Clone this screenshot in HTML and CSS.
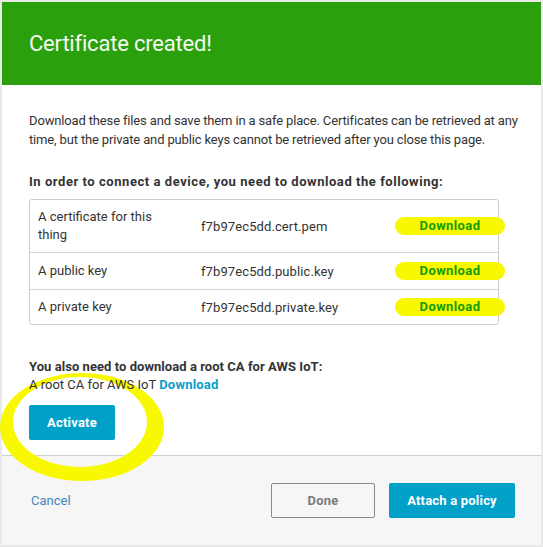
FILE: index.html
```html
<!DOCTYPE html>
<html>
<head>
<meta charset="utf-8">
<link rel="stylesheet" href="styles.css">
</head>
<body>
<div class="modal">
  <div class="header"><h1 class="title">Certificate created!</h1></div>
  <div class="content">
    <p class="intro">Download these files and save them in a safe place. Certificates can be retrieved at any time, but the private and public keys cannot be retrieved after you close this page.</p>
    <p class="label">In order to connect a device, you need to download the following:</p>
    <div class="files">
      <div class="row tall">
        <div class="c1">A certificate for this thing</div>
        <div class="c2">f7b97ec5dd.cert.pem</div>
        <div class="c3"><span class="dl">Download</span></div>
      </div>
      <div class="row">
        <div class="c1">A public key</div>
        <div class="c2">f7b97ec5dd.public.key</div>
        <div class="c3"><span class="dl">Download</span></div>
      </div>
      <div class="row last">
        <div class="c1">A private key</div>
        <div class="c2">f7b97ec5dd.private.key</div>
        <div class="c3"><span class="dl">Download</span></div>
      </div>
    </div>
    <p class="label root">You also need to download a root CA for AWS IoT:</p>
    <p class="rootline">A root CA for AWS IoT <a class="link">Download</a></p>
    <div class="activate-wrap">
      <button class="btn primary activate">Activate</button>
      <svg class="ring" width="166" height="112" viewBox="0 0 166 112">
        <path fill="#f8f800" fill-rule="evenodd" d="M0 57 A82 54 0 1 0 164 57 A82 54 0 1 0 0 57 Z M13 52 A67 45 0 1 0 147 52 A67 45 0 1 0 13 52 Z"/>
      </svg>
    </div>
  </div>
  <div class="footer">
    <a class="cancel">Cancel</a>
    <div class="actions">
      <button class="btn secondary">Done</button>
      <button class="btn primary">Attach a policy</button>
    </div>
  </div>
</div>
</body>
</html>
```
FILE: styles.css
```css
html, body {
  margin: 0;
  padding: 0;
  background: #e9e9e9;
}
body {
  padding: 2px;
  font-family: Roboto, "Noto Sans", sans-serif;
  color: #333;
  font-size: 13px;
}
.modal {
  width: 539px;
  height: 543px;
  background: #fff;
  display: flex;
  flex-direction: column;
}
.header {
  background: #2ba00d;
  height: 83px;
  display: flex;
  align-items: center;
  padding-left: 27px;
}
.title {
  margin: 0;
  font-weight: 400;
  font-size: 22px;
  color: #f4fbf2;
  letter-spacing: -0.2px;
}
.content {
  flex: 1;
  padding: 26px 18px 0 27px;
  position: relative;
}
.intro {
  margin: 0;
  line-height: 19px;
  letter-spacing: -0.15px;
}
.label {
  margin: 23px 0 8px;
  font-weight: 700;
  line-height: 19px;
  letter-spacing: 0.55px;
}
.files {
  border: 1px solid #ccc;
  border-radius: 3px;
  width: 468px;
}
.row {
  display: flex;
  align-items: center;
  height: 36px;
  border-top: 1px solid #d5d5d5;
}
.row:first-child { border-top: none; }
.row.tall { height: 52px; }
.row.last { height: 34px; }
.c1 {
  flex-shrink: 0;
  width: 122px;
  padding: 0 41px 0 8px;
  line-height: 18px;
}
.c2 {
  flex-shrink: 0;
  width: 194px;
  letter-spacing: 0.1px;
}
.c3 {
  flex: 1;
  display: flex;
}
.dl {
  flex-shrink: 0;
  display: inline-block;
  width: 110px;
  height: 18px;
  line-height: 18px;
  border-radius: 9px;
  background: #f8f800;
  color: #179a08;
  font-weight: 700;
  letter-spacing: 0.4px;
  text-align: center;
}
.root {
  margin: 32px 0 0;
  letter-spacing: 0.05px;
  position: relative;
  z-index: 1;
}
.rootline {
  margin: 0;
  line-height: 17px;
  position: relative;
  z-index: 1;
}
.link {
  color: #0a9dc8;
  font-weight: 700;
  letter-spacing: 0.2px;
}
.activate-wrap {
  position: relative;
  margin-top: 12px;
}
.btn {
  font-family: Roboto, "Noto Sans", sans-serif;
  font-size: 13px;
  font-weight: 700;
  border-radius: 2px;
  height: 35px;
  cursor: pointer;
  letter-spacing: 0.2px;
}
.primary {
  background: #00a1c9;
  border: none;
  color: #fff;
}
.activate { width: 86px; }
.ring {
  position: absolute;
  left: -29px;
  top: -35px;
}
.footer {
  background: #f6f6f6;
  border-top: 1px solid #cfcfcf;
  height: 89px;
  display: flex;
  align-items: center;
  justify-content: space-between;
  padding: 0 26px 0 29px;
}
.cancel {
  color: #4484c4;
  font-size: 13px;
}
.actions {
  display: flex;
  gap: 14px;
}
.secondary {
  background: #f6f6f6;
  border: 1px solid #8a8a8a;
  color: #7b7b7b;
  width: 104px;
}
.actions .primary { width: 126px; }
```
